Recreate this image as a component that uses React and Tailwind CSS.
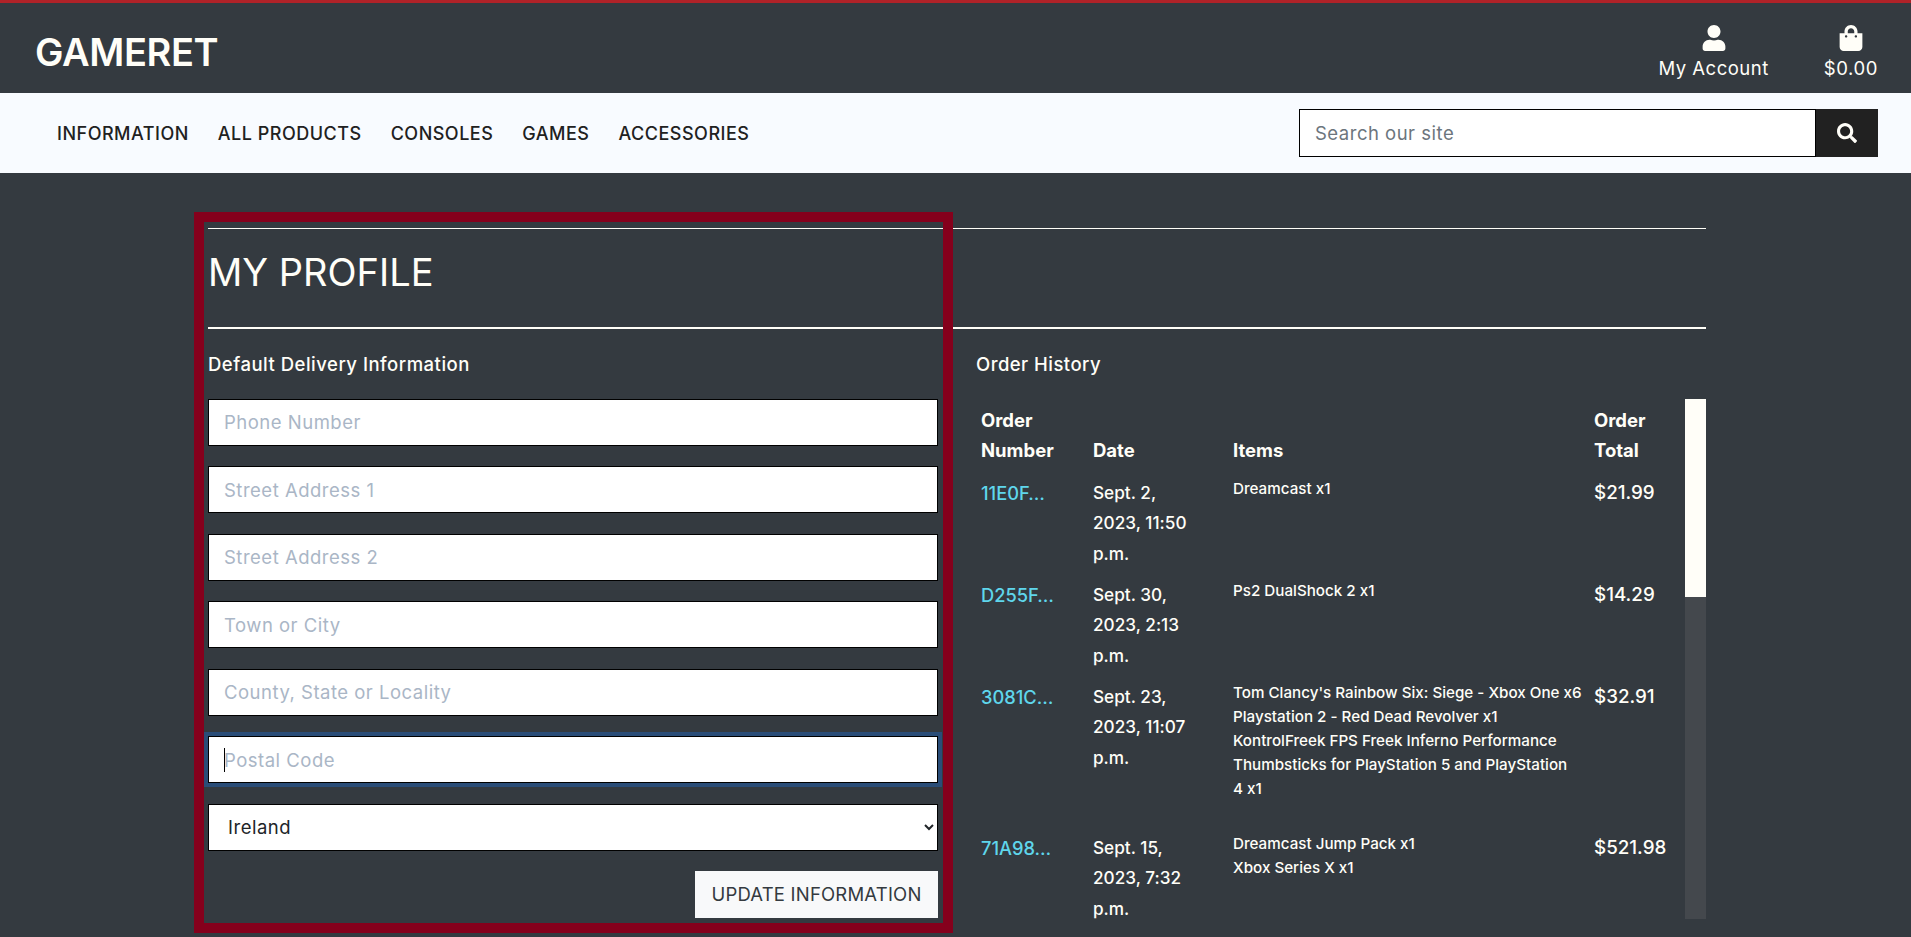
import { FaUser, FaShoppingBag, FaSearch } from 'react-icons/fa';

const navLinks = ['INFORMATION', 'ALL PRODUCTS', 'CONSOLES', 'GAMES', 'ACCESSORIES'];

const fields = ['Phone Number', 'Street Address 1', 'Street Address 2', 'Town or City', 'County, State or Locality'];

const orders = [
  {
    id: '11E0F…',
    date: ['Sept. 2,', '2023, 11:50', 'p.m.'],
    items: ['Dreamcast x1'],
    total: '$21.99',
  },
  {
    id: 'D255F…',
    date: ['Sept. 30,', '2023, 2:13', 'p.m.'],
    items: ['Ps2 DualShock 2 x1'],
    total: '$14.29',
  },
  {
    id: '3081C…',
    date: ['Sept. 23,', '2023, 11:07', 'p.m.'],
    items: [
      "Tom Clancy's Rainbow Six: Siege - Xbox One x6",
      'Playstation 2 - Red Dead Revolver x1',
      'KontrolFreek FPS Freek Inferno Performance',
      'Thumbsticks for PlayStation 5 and PlayStation',
      '4 x1',
    ],
    total: '$32.91',
  },
  {
    id: '71A98…',
    date: ['Sept. 15,', '2023, 7:32', 'p.m.'],
    items: ['Dreamcast Jump Pack x1', 'Xbox Series X x1'],
    total: '$521.98',
  },
];

const inputClass =
  'block h-[47px] w-full border border-black bg-white px-[15px] text-[18.5px] tracking-[0.5px] text-[#212529] placeholder:text-[#aab6c6] outline-none';

const App = () => {
  return (
    <div className="min-h-screen overflow-hidden bg-[#343a40] font-['Inter',sans-serif] text-[#fffef8] [font-feature-settings:'calt'_0]">
      {/* Top bar */}
      <header className="flex h-[93px] items-center justify-between border-t-[3px] border-[#b02228] pl-[35px] pr-[33px]">
        <a className="pt-[7px] text-[38px] font-semibold leading-none tracking-[-0.4px]">GAMERET</a>
        <div className="flex gap-[55px] pt-[11px]">
          <div className="flex flex-col items-center">
            <FaUser className="text-[26px]" />
            <span className="mt-[3px] text-[18.5px] leading-[28px] tracking-[0.5px]">My Account</span>
          </div>
          <div className="flex flex-col items-center">
            <FaShoppingBag className="text-[26px]" />
            <span className="mt-[3px] text-[18.5px] leading-[28px] tracking-[0.6px]">$0.00</span>
          </div>
        </div>
      </header>

      {/* Nav */}
      <nav className="flex h-[80px] items-center justify-between bg-[#f8fbff] pl-[57px] pr-[33px] text-[#212121]">
        <ul className="flex gap-[29px] pt-[1px] text-[18px] font-medium tracking-[0.5px]">
          {navLinks.map((link) => (
            <li key={link}>{link}</li>
          ))}
        </ul>
        <form className="flex h-[48px] w-[579px]">
          <input
            placeholder="Search our site"
            className="h-full min-w-0 flex-1 border border-black bg-white px-[15px] text-[18.5px] tracking-[0.5px] outline-none placeholder:text-[#6c757d]"
          />
          <button type="button" className="flex w-[62px] items-center justify-center bg-[#212121] text-[20px] text-[#fffef8]">
            <FaSearch />
          </button>
        </form>
      </nav>

      {/* Profile */}
      <main className="relative pl-[208px] pr-[205px] pt-[55px]">
        <div className="border-y border-b-2 border-t-[#fffef8] border-b-[#fffef8]">
          <h1 className="flex h-[98px] items-center pb-[12px] text-[38px] leading-none">MY PROFILE</h1>
        </div>

        <div className="flex">
          {/* Delivery form */}
          <section className="w-[730px] shrink-0">
            <h2 className="flex h-[69.8px] items-center pt-[2px] text-[18.5px] font-[450] tracking-[0.5px]">Default Delivery Information</h2>
            <div className="flex flex-col gap-[20.5px]">
              {fields.map((field) => (
                <input key={field} placeholder={field} className={inputClass} />
              ))}
              <div className="relative">
                <input placeholder="Postal Code" className={`${inputClass} ring-4 ring-[#2a4d78]`} />
                <span className="absolute left-[16px] top-[12px] h-[24px] w-px bg-black" />
              </div>
              <select className="block h-[47px] w-full border border-black bg-white px-[15px] text-[18.5px] tracking-[0.5px] text-[#212529] outline-none">
                <option>Ireland</option>
              </select>
            </div>
            <div className="mt-[20px] flex justify-end">
              <button type="button" className="h-[47px] w-[243px] bg-[#f8f9fa] pt-[2px] text-[18.5px] tracking-[0.2px] text-[#343a40]">
                UPDATE INFORMATION
              </button>
            </div>
          </section>

          {/* Order history */}
          <section className="ml-[38px] flex-1">
            <h2 className="flex h-[69.8px] items-center pt-[2px] text-[18.5px] font-[450] tracking-[0.45px]">Order History</h2>
            <div className="flex h-[520px] overflow-hidden">
              <div className="flex-1 overflow-hidden">
                <table className="w-[709px] table-fixed border-collapse text-[17.2px] font-[450] leading-[30.5px]">
                  <colgroup>
                    <col className="w-[112px]" />
                    <col className="w-[140px]" />
                    <col className="w-[361px]" />
                    <col className="w-[96px]" />
                  </colgroup>
                  <thead>
                    <tr className="text-left align-bottom text-[18.5px] font-semibold">
                      <th className="px-[5px] pb-[7px] pt-[6px]">
                        Order
                        <br />
                        Number
                      </th>
                      <th className="px-[5px] pb-[7px] pt-[6px]">Date</th>
                      <th className="px-[5px] pb-[7px] pt-[6px]">Items</th>
                      <th className="px-[5px] pb-[7px] pt-[6px]">
                        Order
                        <br />
                        Total
                      </th>
                    </tr>
                  </thead>
                  <tbody>
                    {orders.map((order) => (
                      <tr key={order.id} className="align-top">
                        <td className="px-[5px] pt-[5px] text-[18.3px]">
                          <a className="text-[#5fd6ec]">{order.id}</a>
                        </td>
                        <td className="px-[5px] pb-[5.4px] pt-[5px]">
                          {order.date.map((line) => (
                            <div key={line}>{line}</div>
                          ))}
                        </td>
                        <td className="px-[5px] pb-[5px] pt-[4px]">
                          <div className="mb-[22px] text-[15.2px] leading-[24px]">
                            {order.items.map((item) => (
                              <div key={item} className="whitespace-nowrap">
                                {item}
                              </div>
                            ))}
                          </div>
                        </td>
                        <td className="px-[5px] pt-[5px] text-[18.8px]">{order.total}</td>
                      </tr>
                    ))}
                  </tbody>
                </table>
              </div>
              <div className="w-[21px] shrink-0 bg-[#44484d]">
                <div className="h-[198px] bg-[#fffef8]" />
              </div>
            </div>
          </section>
        </div>

        {/* Highlight box over the left column */}
        <div className="pointer-events-none absolute left-[194px] top-[39px] h-[721px] w-[759px] border-[10px] border-[#85001c]" />
      </main>
    </div>
  );
};

export default App;
